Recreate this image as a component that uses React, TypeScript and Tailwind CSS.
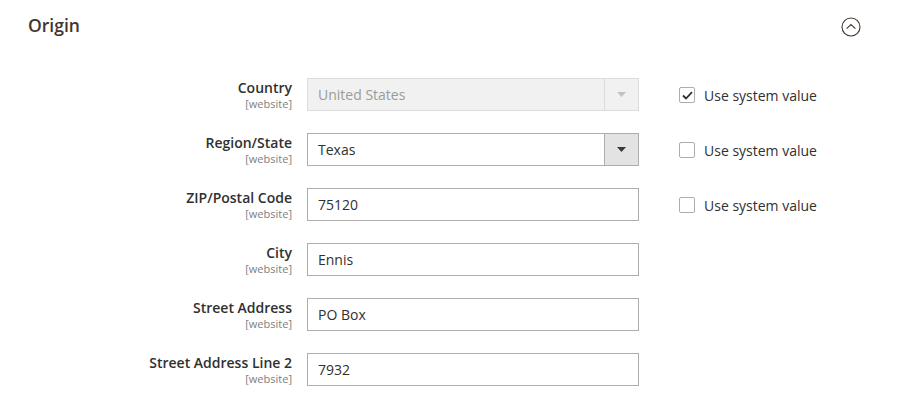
import React from "react";

type Row = {
  label: string;
  value: string;
  kind: "select" | "text";
  disabled?: boolean;
  inherit?: boolean | null;
};

const ROWS: Row[] = [
  { label: "Country", value: "United States", kind: "select", disabled: true, inherit: true },
  { label: "Region/State", value: "Texas", kind: "select", inherit: false },
  { label: "ZIP/Postal Code", value: "75120", kind: "text", inherit: false },
  { label: "City", value: "Ennis", kind: "text", inherit: null },
  { label: "Street Address", value: "PO Box", kind: "text", inherit: null },
  { label: "Street Address Line 2", value: "7932", kind: "text", inherit: null },
];

function Arrow({ muted }: { muted?: boolean }) {
  return (
    <svg width="9" height="5" viewBox="0 0 9 5" aria-hidden>
      <path d="M0 0h9L4.5 5z" fill={muted ? "#c2c2c2" : "#41362f"} />
    </svg>
  );
}

function Field({ row }: { row: Row }) {
  if (row.kind === "select") {
    return (
      <div
        className={
          row.disabled
            ? "flex h-[33px] w-[332px] items-stretch border border-[#dcdcdc] bg-[#f1f1f1] text-[#9b9b9b]"
            : "flex h-[33px] w-[332px] items-stretch border border-[#adadad] bg-white text-[#303030]"
        }
      >
        <div className="flex flex-1 items-center pl-[10px] text-[14px]">{row.value}</div>
        <div
          className={
            row.disabled
              ? "flex w-[34px] items-center justify-center border-l border-[#dcdcdc]"
              : "flex w-[34px] items-center justify-center border-l border-[#adadad] bg-[#e3e3e3]"
          }
        >
          <Arrow muted={row.disabled} />
        </div>
      </div>
    );
  }
  return (
    <div className="flex h-[33px] w-[332px] items-center border border-[#adadad] bg-white pl-[10px] text-[14px] text-[#303030]">
      {row.value}
    </div>
  );
}

function Checkbox({ checked }: { checked: boolean }) {
  return (
    <span className="flex h-[16px] w-[16px] items-center justify-center rounded-[2px] border border-[#adadad] bg-white">
      {checked && (
        <svg width="11" height="9" viewBox="0 0 11 9" aria-hidden>
          <path d="M1 4.5l3 3L10 1.2" fill="none" stroke="#303030" strokeWidth="1.8" />
        </svg>
      )}
    </span>
  );
}

export default function App() {
  return (
    <div className="h-[412px] w-[900px] bg-white font-['Open_Sans',sans-serif] text-[#303030]">
      <div className="flex items-start justify-between pl-[28px] pr-[39px] pt-[13px]">
        <h2 className="text-[17.5px] font-semibold leading-[24px] text-[#41362f]">Origin</h2>
        <svg width="20" height="20" viewBox="0 0 20 20" className="mt-[4px]" aria-hidden>
          <circle cx="10" cy="10" r="9" fill="none" stroke="#41362f" strokeWidth="1.1" />
          <path d="M5.6 11.6L10 7.6l4.4 4" fill="none" stroke="#41362f" strokeWidth="1.1" />
        </svg>
      </div>

      <div className="mt-[41px] flex flex-col gap-[22px]">
        {ROWS.map((row) => (
          <div key={row.label} className="flex items-start">
            <div className="w-[292px] text-right">
              <div className="text-[14px] font-semibold leading-[19px]">{row.label}</div>
              <div className="text-[11px] leading-[13px] text-[#808080]">[website]</div>
            </div>
            <div className="ml-[15px]">
              <Field row={row} />
            </div>
            {row.inherit !== null && row.inherit !== undefined && (
              <label className="ml-[40px] flex h-[33px] items-center gap-[9px] pt-[1px] text-[14px]">
                <Checkbox checked={row.inherit} />
                <span>Use system value</span>
              </label>
            )}
          </div>
        ))}
      </div>
    </div>
  );
}
